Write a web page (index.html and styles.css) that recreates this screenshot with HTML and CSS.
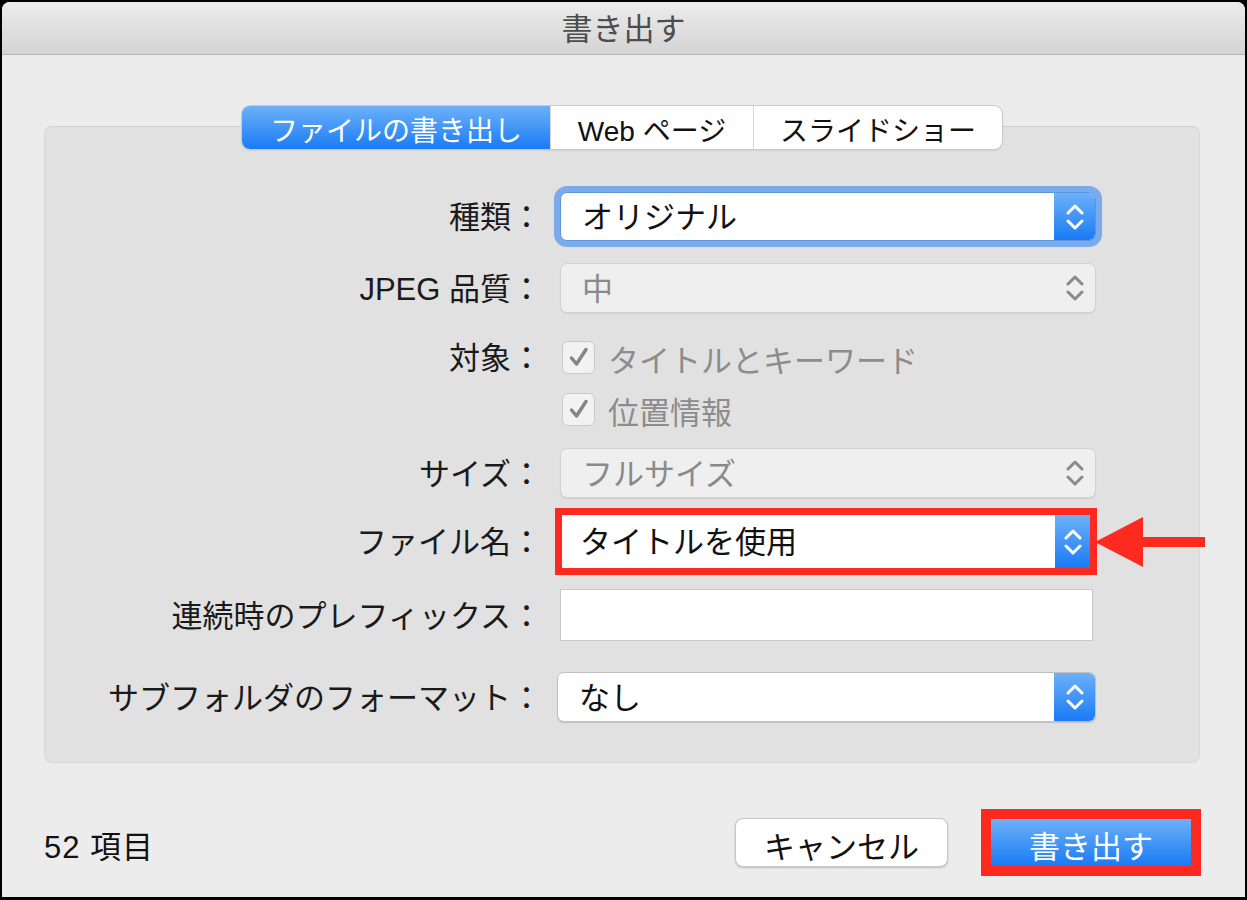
FILE: index.html
```html
<!DOCTYPE html>
<html lang="ja">
<head>
  <meta charset="UTF-8" />
  <title>書き出す</title>
  <link rel="stylesheet" href="styles.css">
</head>
<body>
  <div class="window">
    <div class="titlebar">書き出す</div>
    <div class="content">
      <div class="group">
        <div class="tabs">
          <div class="tab tab-file">ファイルの書き出し</div>
          <div class="tab tab-web">Web ページ</div>
          <div class="tab tab-slide">スライドショー</div>
        </div>

        <div class="row row-kind">
          <div class="label">種類：</div>
          <div class="popup popup-focus">
            <span class="popup-text">オリジナル</span>
            <span class="stepper">
              <svg width="18" height="30" viewBox="0 0 18 30"><polyline points="2,11 9,4 16,11" /><polyline points="2,19 9,26 16,19" /></svg>
            </span>
          </div>
        </div>

        <div class="row row-quality">
          <div class="label">JPEG 品質：</div>
          <div class="popup popup-disabled">
            <span class="popup-text">中</span>
            <span class="stepper">
              <svg width="18" height="30" viewBox="0 0 18 30"><polyline points="2,11 9,4 16,11" /><polyline points="2,19 9,26 16,19" /></svg>
            </span>
          </div>
        </div>

        <div class="row row-target">
          <div class="label">対象：</div>
          <div class="check">
            <span class="box"><svg width="22" height="22" viewBox="0 0 22 22"><polyline points="3.5,12 8.5,18 18,3.5" /></svg></span>
            タイトルとキーワード
          </div>
        </div>
        <div class="row row-target2">
          <div class="label"></div>
          <div class="check">
            <span class="box"><svg width="22" height="22" viewBox="0 0 22 22"><polyline points="3.5,12 8.5,18 18,3.5" /></svg></span>
            位置情報
          </div>
        </div>

        <div class="row row-size">
          <div class="label">サイズ：</div>
          <div class="popup popup-disabled">
            <span class="popup-text">フルサイズ</span>
            <span class="stepper">
              <svg width="18" height="30" viewBox="0 0 18 30"><polyline points="2,11 9,4 16,11" /><polyline points="2,19 9,26 16,19" /></svg>
            </span>
          </div>
        </div>

        <div class="row row-name">
          <div class="label">ファイル名：</div>
          <div class="popup popup-marked">
            <span class="popup-text">タイトルを使用</span>
            <span class="stepper">
              <svg width="18" height="30" viewBox="0 0 18 30"><polyline points="2,11 9,4 16,11" /><polyline points="2,19 9,26 16,19" /></svg>
            </span>
          </div>
          <svg class="arrow" width="110" height="50" viewBox="0 0 110 50">
            <polygon points="0,25 48,0 48,50" />
            <rect x="47" y="20" width="63" height="10" />
          </svg>
        </div>

        <div class="row row-prefix">
          <div class="label">連続時のプレフィックス：</div>
          <div class="field"></div>
        </div>

        <div class="row row-folder">
          <div class="label">サブフォルダのフォーマット：</div>
          <div class="popup popup-folder">
            <span class="popup-text">なし</span>
            <span class="stepper">
              <svg width="18" height="30" viewBox="0 0 18 30"><polyline points="2,11 9,4 16,11" /><polyline points="2,19 9,26 16,19" /></svg>
            </span>
          </div>
        </div>
      </div>

      <div class="footer">
        <div class="count">52 項目</div>
        <button class="btn btn-cancel">キャンセル</button>
        <div class="btn-mark">
          <button class="btn btn-export">書き出す</button>
        </div>
      </div>
    </div>
  </div>
</body>
</html>
```

FILE: styles.css
```css
body {
  margin: 0;
  background: #000;
  font-family: "Liberation Sans", "Noto Sans CJK JP", sans-serif;
  color: #1a1a1a;
}
.window {
  margin: 2px 2px 0 2px;
  height: 895px;
  background: #ececec;
  border-radius: 8px 8px 0 0;
  overflow: hidden;
}
.titlebar {
  height: 52px;
  line-height: 56px;
  border-bottom: 1px solid #b4b4b4;
  background: linear-gradient(#ececec, #d4d4d4);
  text-align: center;
  font-size: 31px;
  color: #4d4d4d;
}
.content {
  padding: 71px 44px 0 42px;
}
.group {
  box-sizing: border-box;
  width: 1156px;
  height: 637px;
  background: #e1e1e1;
  border: 1px solid #d8d8d8;
  border-top-color: #d0d0d0;
  border-radius: 8px;
}

/* tabs */
.tabs {
  display: flex;
  width: 760px;
  height: 43px;
  margin: -21px auto 0;
  background: #fff;
  border-radius: 8px;
  box-shadow: 0 0 0 1px #cacaca, 0 1px 2px rgba(0,0,0,0.18);
  overflow: hidden;
}
.tab {
  display: flex;
  align-items: center;
  justify-content: center;
  padding-top: 2px;
  font-size: 28px;
  color: #111;
  border-left: 1px solid #d8d8d8;
}
.tab-file {
  width: 308px;
  border-left: none;
  color: #fff;
  background: linear-gradient(#6cb1f8, #1a7bf5);
}
.tab-web { width: 202px; }
.tab-slide { flex: 1; }

/* form rows */
.row {
  display: flex;
  align-items: center;
  position: relative;
}
.label {
  flex-shrink: 0;
  width: 497px;
  margin-right: 18px;
  padding-top: 3px;
  text-align: right;
  font-size: 31px;
  line-height: 1.2;
}
.row-kind { margin-top: 43px; }
.row-quality { margin-top: 22px; }
.row-target { margin-top: 19px; height: 50px; }
.row-target2 { margin-top: 2px; height: 50px; }
.row-size { margin-top: 14px; }
.row-name { margin-top: 10px; }
.row-prefix { margin-top: 14px; }
.row-folder { margin-top: 31px; }

.popup {
  box-sizing: border-box;
  display: flex;
  align-items: center;
  width: 536px;
  height: 49px;
  background: #fff;
  border: 1px solid #c4c4c4;
  border-radius: 7px;
  box-shadow: 0 1px 1px rgba(0,0,0,0.15);
}
.popup-text {
  flex: 1;
  padding: 3px 0 0 21px;
  font-size: 31px;
  line-height: 1.2;
  color: #111;
}
.stepper {
  align-self: stretch;
  width: 41px;
  display: flex;
  align-items: center;
  justify-content: center;
  background: linear-gradient(#6cb1f8, #1a7bf5);
  border-radius: 0 6px 6px 0;
}
.stepper svg polyline {
  fill: none;
  stroke: #fff;
  stroke-width: 3;
  stroke-linecap: round;
  stroke-linejoin: round;
}
.popup-focus {
  border-color: #5d94df;
  box-shadow: 0 0 0 6px #7babec;
}
.popup-disabled {
  height: 50px;
  background: #efefef;
  border-color: #d3d3d3;
  box-shadow: 0 1px 1px rgba(0,0,0,0.08);
}
.popup-disabled .popup-text { color: #8a8a8a; }
.popup-disabled .stepper { background: none; }
.popup-disabled .stepper svg polyline { stroke: #8a8a8a; }
.popup-marked {
  width: 542px;
  height: 67px;
  margin-left: -5px;
  border: 7px solid #fe2a1f;
  border-radius: 0;
  box-shadow: none;
}
.popup-marked .popup-text { padding-left: 18px; }
.popup-marked .stepper {
  width: 35px;
  border-radius: 0;
}
.popup-folder {
  width: 539px;
  height: 50px;
  margin-left: -3px;
  border-color: #c0c0c0;
}
.arrow {
  position: absolute;
  left: 1050px;
  top: 9px;
  fill: #fe2a1f;
}

.field {
  box-sizing: border-box;
  width: 533px;
  height: 52px;
  background: #fff;
  border: 1px solid #c9c9c9;
}

.check {
  display: flex;
  align-items: center;
  padding-top: 3px;
  font-size: 31px;
  color: #8c8c8c;
}
.box {
  box-sizing: border-box;
  width: 33px;
  height: 33px;
  margin: -3px 13px 0 2px;
  display: flex;
  align-items: center;
  justify-content: center;
  background: #f2f2f2;
  border: 1px solid #cacaca;
  border-radius: 6px;
}
.box svg polyline {
  fill: none;
  stroke: #858585;
  stroke-width: 3.5;
  stroke-linecap: round;
  stroke-linejoin: round;
}

/* footer */
.footer {
  display: flex;
  align-items: center;
  height: 67px;
  margin-top: 46px;
}
.count {
  flex: 1;
  padding-top: 3px;
  font-size: 31px;
  letter-spacing: 1px;
  color: #111;
}
.btn {
  font-family: inherit;
  font-size: 31px;
  padding: 3px 0 0;
  cursor: pointer;
}
.btn-cancel {
  width: 213px;
  height: 49px;
  background: #fff;
  color: #111;
  border: 1px solid #c6c6c6;
  border-radius: 8px;
  box-shadow: 0 1px 2px rgba(0,0,0,0.2);
}
.btn-mark {
  margin-left: 33px;
  border: 10px solid #fe2a1f;
  display: flex;
}
.btn-export {
  width: 200px;
  height: 47px;
  border: none;
  color: #fff;
  background: linear-gradient(#6cb1f8, #1a7bf5);
}
```
